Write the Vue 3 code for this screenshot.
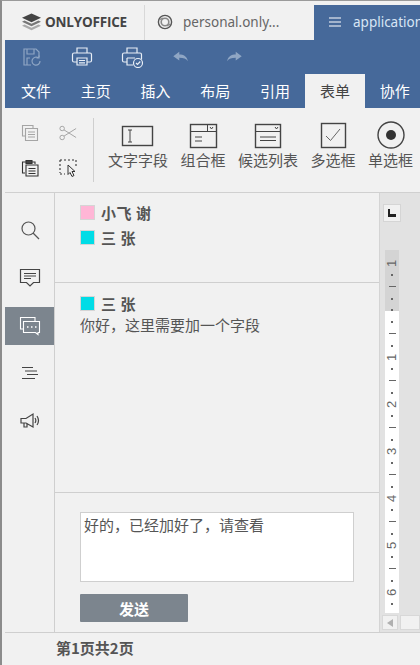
<template>
  <div class="app">
    <div class="titlebar">
      <div class="logo-tab">
        <svg class="logo" width="21" height="18" viewBox="0 0 21 18">
          <path d="M10.5 0.5 20 4.8 10.5 9.2 1 4.8z" fill="#444" />
          <path d="M3.5 7.6 1 8.8 10.5 13.2 20 8.8 17.5 7.6 10.5 10.8z" fill="#777" />
          <path d="M3.5 11.6 1 12.8 10.5 17.2 20 12.8 17.5 11.6 10.5 14.8z" fill="#aaa" />
        </svg>
        <span class="logo-text">ONLYOFFICE</span>
      </div>
      <div class="tab tab--doc">
        <svg width="16" height="16" viewBox="0 0 16 16" fill="none">
          <circle cx="8" cy="8" r="6.6" stroke="#555" stroke-width="1.4" />
          <circle cx="8" cy="8" r="3.8" stroke="#888" stroke-width="1.6" />
          <path d="M3 5.5 6 4M10 12l3-2" stroke="#888" stroke-width="1.2" />
        </svg>
        <span>personal.only...</span>
      </div>
      <div class="tab tab--active">
        <svg width="12" height="10" viewBox="0 0 12 10">
          <path d="M0 1h12M0 5h12M0 9h12" stroke="#fff" stroke-width="1.2" />
        </svg>
        <span>application</span>
      </div>
    </div>

    <header class="ribbon">
      <div class="quick">
        <svg class="q-icon q-icon--dim" viewBox="0 0 22 22" fill="none">
          <path d="M10 19H3V3h12l3 3v5M6 3v5h7V3M6 19v-7h3" />
          <path d="M19 15a4 4 0 1 1-1.5-3M18 9.5V12h-2.5" />
        </svg>
        <svg class="q-icon" viewBox="0 0 22 22" fill="none">
          <path d="M6 7V2h10v5M6 16H3a1.500 1.500 0 0 1-1.500-1.500v-6A1.500 1.500 0 0 1 3 7h16a1.500 1.500 0 0 1 1.500 1.500v6A1.500 1.500 0 0 1 19 16h-3" />
          <path d="M6 12h10v7H6zM8 14.500h6M8 16.800h6" />
        </svg>
        <svg class="q-icon" viewBox="0 0 22 22" fill="none">
          <path d="M6 7V2h10v5M6 16H3a1.500 1.500 0 0 1-1.500-1.500v-6A1.500 1.500 0 0 1 3 7h16a1.500 1.500 0 0 1 1.500 1.500v5" />
          <path d="M6 12v7h6M6 12h8" />
          <circle cx="17" cy="17" r="4.500" fill="#46699a" />
          <path d="M15 17l1.500 1.500L19.300 15.500" />
        </svg>
        <svg class="q-icon q-icon--undo" viewBox="0 0 20 14">
          <path d="M1 6 8 1v3c5 0 9 2 10 8-2-3-5-4-10-4v3z" />
        </svg>
        <svg class="q-icon q-icon--undo q-icon--redo" viewBox="0 0 20 14">
          <path d="M1 6 8 1v3c5 0 9 2 10 8-2-3-5-4-10-4v3z" />
        </svg>
      </div>
      <nav class="menu">
        <span
          v-for="item in menuItems"
          :key="item"
          class="menu__item"
          :class="{ 'menu__item--active': item === '表单' }"
        >{{ item }}</span>
      </nav>
    </header>

    <div class="toolbar">
      <div class="edit-grid">
        <svg class="tool-sm tool-sm--dim" viewBox="0 0 18 18" fill="none">
          <path d="M4 12H1.500V1.500H12V4" />
          <path d="M4.500 4.500h12v12h-12zM7 8h7M7 10.500h7M7 13h7" />
        </svg>
        <svg class="tool-sm tool-sm--dim" viewBox="0 0 20 18" fill="none">
          <circle cx="3.500" cy="4" r="2.500" />
          <circle cx="3.500" cy="14" r="2.500" />
          <path d="M5.500 5.500 19 14M5.500 12.500 19 4" />
        </svg>
        <svg class="tool-sm" viewBox="0 0 18 18" fill="none">
          <path d="M4 14H1.500V3H5M11 3h3v2" />
          <path d="M5 1.500h6v3H5z" fill="#444" />
          <path d="M5 6h12v11H5zM7.500 9.500h7M7.500 12h7M7.500 14.500h7" />
        </svg>
        <svg class="tool-sm" viewBox="0 0 18 18" fill="none">
          <path d="M1 1h16M1 1v13M17 1v6M1 15h5" stroke-dasharray="2 2" />
          <path d="M9 6l7 6.500h-3l2 4-2 1-2-4-2 2z" stroke-width="1" />
        </svg>
      </div>
      <div class="field-tools">
        <div v-for="tool in fieldTools" :key="tool.label" class="field-tool">
          <svg width="34" height="28" viewBox="0 0 34 28" fill="none" stroke="#444">
            <template v-if="tool.kind === 'text'">
              <rect x="1.500" y="5.500" width="30" height="19" stroke-width="1.400" />
              <path d="M7 9h4M7 21h4M9 9v12" />
            </template>
            <template v-else-if="tool.kind === 'combo'">
              <rect x="4.500" y="3.500" width="26" height="23" stroke-width="1.400" />
              <path d="M4.500 10.500h26M21.500 3.500v7M24 6l1.500 2 1.500-2M9 16h7M9 20h7" />
            </template>
            <template v-else-if="tool.kind === 'list'">
              <rect x="4.500" y="3.500" width="25" height="23" stroke-width="1.400" />
              <path d="M4.500 10.500h25M24 6l1.500 2 1.500-2M9 16h16M9 19.500h16" />
            </template>
            <template v-else-if="tool.kind === 'check'">
              <rect x="5.500" y="2.500" width="24" height="24" stroke-width="1.400" />
              <path d="M10 15l4.500 4.500L24 8" stroke="#666" />
            </template>
            <template v-else>
              <circle cx="17" cy="14" r="13" stroke-width="1.400" />
              <circle cx="17" cy="14" r="5" fill="#333" stroke="none" />
            </template>
          </svg>
          <span>{{ tool.label }}</span>
        </div>
      </div>
    </div>

    <div class="workspace">
      <aside class="sidebar">
        <button class="side-btn" type="button">
          <svg width="20" height="20" viewBox="0 0 20 20" fill="none" stroke="#555" stroke-width="1.200">
            <circle cx="8.500" cy="8.500" r="6.500" />
            <path d="M13 13l6 6" />
          </svg>
        </button>
        <button class="side-btn" type="button">
          <svg width="22" height="20" viewBox="0 0 22 20" fill="none" stroke="#444" stroke-width="1.200">
            <path d="M1.500 1.500h19v13h-6l-3.500 3.500-3.500-3.500h-6z" />
            <path d="M5 5.500h12M5 8h12M5 10.500h7" />
          </svg>
        </button>
        <button class="side-btn side-btn--active" type="button">
          <svg width="22" height="20" viewBox="0 0 22 20" fill="none" stroke="#fff" stroke-width="1.100">
            <path d="M4 13H1.500V1.500H16V5" />
            <path d="M4.500 5.500h16v11H19v2l-2.500-2H4.500z" />
            <path d="M8 11h1.500M12 11h1.500M16 11h1.500" stroke-width="1.500" />
          </svg>
        </button>
        <button class="side-btn side-btn--low" type="button">
          <svg width="18" height="14" viewBox="0 0 18 14" fill="none" stroke="#444" stroke-width="1">
            <path d="M1 1.500h11M4 5h12M6 8.500h11M1 12.500h13" />
          </svg>
        </button>
        <button class="side-btn side-btn--low" type="button">
          <svg width="20" height="18" viewBox="0 0 20 18" fill="none" stroke="#444" stroke-width="1.200">
            <path d="M1 6.500h5L13 2v13L6 11H1zM4 11v4h3v-4M15 6c1 1.500 1 3.500 0 5M17 4c2 3 2 6 0 9" />
          </svg>
        </button>
      </aside>

      <section class="chat">
        <div class="users">
          <div v-for="user in users" :key="user.name" class="user">
            <i class="swatch" :style="{ background: user.color }"></i>
            <b>{{ user.name }}</b>
          </div>
        </div>
        <div class="messages">
          <div class="user">
            <i class="swatch" style="background: #00dce6"></i>
            <b>三 张</b>
          </div>
          <p class="message">你好，这里需要加一个字段</p>
        </div>
        <div class="composer">
          <div class="input">好的，已经加好了，请查看</div>
          <button class="send" type="button">发送</button>
        </div>
      </section>

      <div class="ruler-side">
        <div class="tab-stop"><i></i></div>
        <div class="ruler">
          <div class="ruler__margin"></div>
          <div class="ruler__ticks">
            <span v-for="(tick, i) in ticks" :key="i" class="tick">
              <em v-if="tick.num">{{ tick.num }}</em>
              <i v-else :class="tick.line ? 'tick__line' : 'tick__dot'"></i>
            </span>
          </div>
        </div>
        <div class="scroll-row">
          <div class="scroll-btn"><i></i></div>
          <div class="scroll-track"></div>
        </div>
      </div>
    </div>

    <footer class="status">第1页共2页</footer>
  </div>
</template>

<script setup>
const menuItems = ["文件", "主页", "插入", "布局", "引用", "表单", "协作"];

const fieldTools = [
  { kind: "text", label: "文字字段" },
  { kind: "combo", label: "组合框" },
  { kind: "list", label: "候选列表" },
  { kind: "check", label: "多选框" },
  { kind: "radio", label: "单选框" },
];

const users = [
  { name: "小飞 谢", color: "#ffb6d6" },
  { name: "三 张", color: "#00dce6" },
];

// ruler: a tick every 1/4 unit, starting at the "1" above the zero mark
const ticks = [];
for (let i = -4; i < 26; i++) {
  const q = ((i % 4) + 4) % 4;
  const num = q === 0 ? String(Math.abs(i / 4)) : "";
  ticks.push({ num: i === 0 ? "" : num, line: q === 2 });
}
</script>

<style>
html,
body {
  margin: 0;
  overflow: hidden;
}
</style>

<style scoped>
.app {
  box-sizing: border-box;
  width: 420px;
  height: 665px;
  display: flex;
  flex-direction: column;
  overflow: hidden;
  background: #f1f1f1;
  border-top: 1px solid #9a9a9a;
  border-left: 2px solid #8c8c8c;
  font-family: "Noto Sans CJK SC", "Liberation Sans", sans-serif;
  color: #444;
}

.titlebar {
  height: 39px;
  flex: none;
  display: flex;
  align-items: flex-end;
  padding-left: 3px;
}

.logo-tab {
  width: 140px;
  height: 35px;
  flex: none;
  display: flex;
  align-items: center;
  gap: 3px;
  box-sizing: border-box;
  padding: 0 0 2px 16px;
  border-right: 1px solid #d8d8d8;
}

.logo-text {
  font: 700 13.500px "Open Sans", "Liberation Sans", sans-serif;
  letter-spacing: -0.2px;
  color: #444;
}

.tab {
  height: 35px;
  display: flex;
  align-items: center;
  box-sizing: border-box;
  font: 13.500px "Noto Sans", sans-serif;
  padding-bottom: 2px;
}

.tab--doc {
  width: 169px;
  flex: none;
  gap: 10px;
  padding-left: 12px;
  color: #666;
}

.tab--active {
  flex: none;
  width: 106px;
  gap: 12px;
  padding-left: 15px;
  background: #46699a;
  color: #d8e6f5;
  white-space: nowrap;
  overflow: hidden;
}

.tab--active svg {
  flex: none;
}

.ribbon {
  margin-left: 3px;
  height: 68px;
  flex: none;
  background: #46699a;
  display: flex;
  flex-direction: column;
}

.quick {
  height: 34px;
  display: flex;
  align-items: center;
  gap: 28px;
  padding-left: 16px;
}

.q-icon {
  width: 22px;
  height: 22px;
  stroke: #e8eef6;
  stroke-width: 1.2;
}

.q-icon--dim {
  stroke: #8fa6c4;
}

.q-icon--undo {
  width: 18px;
  height: 12px;
  margin-left: 1px;
  margin-right: 6px;
  fill: #8fa6c4;
  stroke: none;
}

.q-icon--redo {
  transform: scaleX(-1);
}

.menu {
  height: 34px;
  display: flex;
  align-items: stretch;
  padding-left: 1px;
}

.menu__item {
  width: 59.800px;
  flex: none;
  box-sizing: border-box;
  padding-bottom: 2px;
  display: flex;
  align-items: center;
  justify-content: center;
  font-size: 15px;
  color: #fff;
}

.menu__item--active {
  background: #f1f1f1;
  color: #444;
}

.toolbar {
  height: 85px;
  flex: none;
  margin-left: 3px;
  display: flex;
  align-items: flex-start;
  border-bottom: 1px solid #d0d0d0;
  box-sizing: border-box;
}

.edit-grid {
  display: grid;
  grid-template-columns: 19px 19px;
  column-gap: 19px;
  row-gap: 17px;
  padding: 0 15px 0 16px;
  height: 64px;
  margin-top: 10px;
  align-content: center;
  border-right: 1px solid #cfcfcf;
}

.tool-sm {
  width: 18px;
  height: 18px;
  stroke: #333;
  stroke-width: 1.100;
}

.tool-sm--dim {
  stroke: #a5a5a5;
}

.field-tools {
  display: flex;
  padding: 13px 0 0 14px;
  gap: 12.500px;
}

.field-tool {
  display: flex;
  flex-direction: column;
  align-items: center;
  font-size: 15px;
  line-height: 20px;
  color: #555;
  white-space: nowrap;
  gap: 1px;
}

.workspace {
  flex: 1;
  min-height: 0;
  display: flex;
  margin-left: 3px;
}

.sidebar {
  width: 50px;
  flex: none;
  box-sizing: border-box;
  border-right: 1px solid #cfcfcf;
  display: flex;
  flex-direction: column;
  padding-top: 18px;
  gap: 10px;
}

.side-btn {
  width: 49px;
  height: 38px;
  padding: 0;
  border: 0;
  background: transparent;
  display: flex;
  align-items: center;
  justify-content: center;
}

.side-btn--low {
  padding-bottom: 2px;
}

.side-btn--active {
  background: #7c858e;
}

.chat {
  flex: 1;
  min-width: 0;
  display: flex;
  flex-direction: column;
  border-right: 1px solid #d4d4d4;
}

.users {
  height: 90px;
  flex: none;
  box-sizing: border-box;
  padding: 7px 0 0 25px;
  border-bottom: 1px solid #cfcfcf;
}

.user {
  height: 25px;
  display: flex;
  align-items: center;
  gap: 6px;
  font-size: 15px;
  color: #555;
}

.user b {
  font-weight: 700;
  letter-spacing: 0.5px;
}

.swatch {
  width: 15px;
  height: 15px;
  box-sizing: border-box;
  border: 1px solid #d5d5d5;
}

.messages {
  flex: 1;
  padding: 8px 0 0 25px;
  border-bottom: 1px solid #cfcfcf;
}

.message {
  margin: 0;
  font-size: 15px;
  line-height: 18px;
  color: #555;
}

.composer {
  height: 139px;
  flex: none;
  box-sizing: border-box;
  padding: 19px 25px 0 25px;
}

.input {
  height: 70px;
  box-sizing: border-box;
  padding: 2px 3px;
  background: #fff;
  border: 1px solid #cfcfcf;
  font-size: 15px;
  line-height: 20px;
  color: #555;
}

.send {
  display: block;
  width: 108px;
  height: 28px;
  margin-top: 12px;
  padding: 0;
  border: 0;
  border-radius: 1px;
  background: #7c858e;
  color: #fff;
  font: 700 15px "Noto Sans CJK SC", sans-serif;
}

.ruler-side {
  width: 40px;
  flex: none;
  display: flex;
  flex-direction: column;
  background: #e2e2e2;
}

.tab-stop {
  width: 18px;
  height: 18px;
  margin: 11px 0 0 3px;
  box-sizing: border-box;
  background: #f1f1f1;
  border: 1px solid #d5d5d5;
  display: flex;
  align-items: center;
  justify-content: center;
}

.tab-stop i {
  width: 8px;
  height: 8px;
  box-sizing: border-box;
  border-left: 2px solid #222;
  border-bottom: 3px solid #222;
}

.ruler {
  width: 14px;
  height: 363px;
  margin: 28px 0 0 5px;
  background: #fff;
  display: flex;
  flex-direction: column;
  overflow: hidden;
}

.ruler__margin {
  height: 61px;
  flex: none;
  background: #d4d4d4;
  margin-bottom: -61px;
}

.ruler__ticks {
  position: relative;
  padding-top: 7.600px;
}

.tick {
  height: 11.750px;
  display: flex;
  align-items: center;
  justify-content: center;
}

.tick em {
  font: normal 13px "Liberation Sans", sans-serif;
  color: #666;
  transform: rotate(-90deg);
}

.tick__dot {
  width: 2px;
  height: 2px;
  background: #666;
}

.tick__line {
  width: 7px;
  height: 1px;
  background: #666;
}

.scroll-row {
  display: flex;
  gap: 2px;
  margin: 2px 0 0 2px;
}

.scroll-btn {
  width: 16px;
  height: 15px;
  background: #f1f1f1;
  border: 1px solid #d8d8d8;
  box-sizing: border-box;
  display: flex;
  align-items: center;
  justify-content: center;
}

.scroll-btn i {
  border-style: solid;
  border-width: 4px 6px 4px 0;
  border-color: transparent #b0b0b0 transparent transparent;
}

.scroll-track {
  flex: 1;
  height: 15px;
  background: #f1f1f1;
  border: 1px solid #d8d8d8;
  box-sizing: border-box;
}

.status {
  height: 33px;
  flex: none;
  margin-left: 3px;
  box-sizing: border-box;
  padding: 5px 0 0 51px;
  border-top: 1px solid #cfcfcf;
  font-size: 15px;
  font-weight: 700;
  color: #555;
  line-height: 20px;
}
</style>
